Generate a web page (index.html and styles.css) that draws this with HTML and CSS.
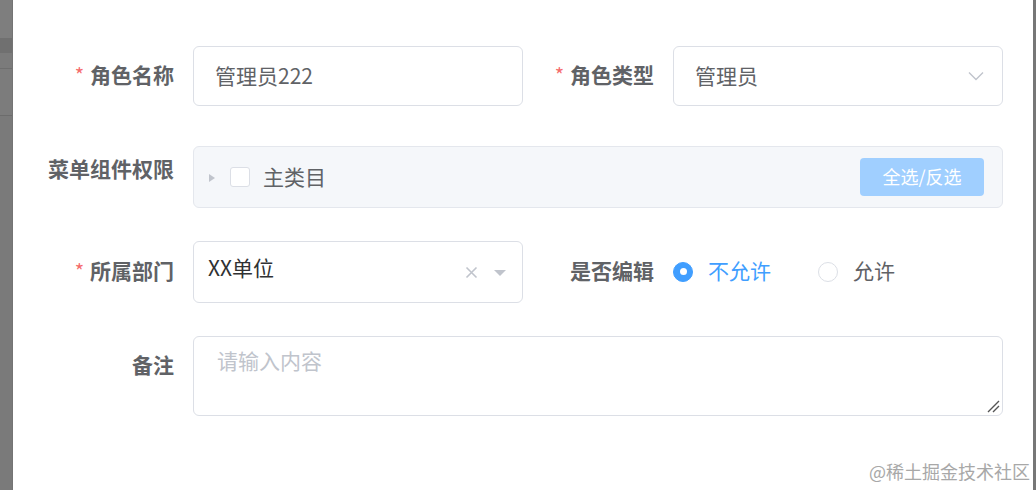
FILE: index.html
```html
<!DOCTYPE html>
<html lang="zh-CN">
<head>
<meta charset="utf-8">
<title>角色编辑</title>
<link rel="stylesheet" href="styles.css">
</head>
<body>
<div class="page">
  <div class="side-left">
    <div class="band b1"></div>
    <div class="band b2"></div>
    <div class="band b3"></div>
    <div class="band b4"></div>
  </div>
  <main class="dialog">
    <form class="form">
      <div class="row r1">
        <label class="lbl req">角色名称</label>
        <div class="field input"><span class="val">管理员222</span></div>
        <label class="lbl lbl-r req">角色类型</label>
        <div class="field input select">
          <span class="val">管理员</span>
          <svg class="chev" width="16" height="10" viewBox="0 0 16 10"><path d="M1 1.5 L8 8.5 L15 1.5" fill="none" stroke="#c0c4cc" stroke-width="1.4"/></svg>
        </div>
      </div>
      <div class="row r2">
        <label class="lbl lbl-top">菜单组件权限</label>
        <div class="field wide tree">
          <span class="caret"></span>
          <span class="checkbox"></span>
          <span class="tree-text">主类目</span>
          <span class="spacer"></span>
          <button type="button" class="btn">全选/反选</button>
        </div>
      </div>
      <div class="row r3">
        <label class="lbl req">所属部门</label>
        <div class="field input select2">
          <span class="val dark">XX单位</span>
          <svg class="clear" width="13" height="13" viewBox="0 0 13 13"><path d="M1.5 1.5 L11.5 11.5 M11.5 1.5 L1.5 11.5" stroke="#c0c4cc" stroke-width="1.6"/></svg>
          <span class="tri"></span>
        </div>
        <label class="lbl lbl-r">是否编辑</label>
        <div class="radios">
          <span class="radio on"></span><span class="rtext on">不允许</span>
          <span class="radio"></span><span class="rtext">允许</span>
        </div>
      </div>
      <div class="row r4">
        <label class="lbl">备注</label>
        <div class="field wide textarea">
          <span class="placeholder">请输入内容</span>
          <svg class="grip" width="14" height="14" viewBox="0 0 14 14"><path d="M2 13 L13 2 M7 13 L13 7" stroke="#555" stroke-width="1.4"/></svg>
        </div>
      </div>
    </form>
  </main>
  <div class="side-right"></div>
  <div class="watermark">@稀土掘金技术社区</div>
</div>
</body>
</html>
```
FILE: styles.css
```css
* { box-sizing: border-box; }
html, body { margin: 0; padding: 0; }
body {
  font-family: "Noto Sans CJK SC", "Noto Sans", sans-serif;
  background: #fff;
}
.page {
  position: relative;
  display: flex;
  width: 1036px;
  height: 490px;
  overflow: hidden;
}
.side-left {
  width: 13px;
  flex: none;
  background: #7a7a7a;
  display: flex;
  flex-direction: column;
  border-right: 1px solid #747474;
}
.band { flex: none; }
.b1 { height: 38px; background: #7e7e7e; }
.b2 { height: 15px; background: #707070; }
.b3 { height: 16px; background: #7b7b7b; border-bottom: 1px solid #6e6e6e; }
.b4 { height: 47px; background: #7c7c7c; border-bottom: 1px solid #6c6c6c; }
.side-right {
  width: 3px;
  flex: none;
  background: #777;
}
.dialog {
  flex: 1;
  background: #fff;
  padding-top: 46px;
}
.form { display: flex; flex-direction: column; }
.row { display: flex; align-items: stretch; }
.r1 { height: 60px; margin-bottom: 40px; }
.r2 { height: 62px; margin-bottom: 33px; }
.r3 { height: 62px; margin-bottom: 33px; }
.r4 { height: 80px; }

.lbl {
  flex: none;
  width: 180px;
  padding-right: 19px;
  text-align: right;
  font-size: 21px;
  font-weight: bold;
  color: #606266;
  line-height: 56px;
}
.r3 .lbl { line-height: 58px; }
.lbl-r { width: 150px; }
.lbl-top { line-height: 45px; }
.req::before {
  content: "*";
  color: #f56c6c;
  margin-right: 6px;
  font-weight: normal;
  font-size: 20px;
}
.field {
  flex: none;
  border: 1px solid #dcdfe6;
  border-radius: 6px;
  background: #fff;
}
.input {
  width: 330px;
  display: flex;
  align-items: center;
  padding-left: 21px;
  padding-right: 16px;
}
.val {
  font-size: 21px;
  color: #606266;
  margin-bottom: 3px;
}
.val.dark { color: #303133; }
.select { justify-content: space-between; }
.chev { margin-right: 2px; }
.wide { width: 810px; }

.tree {
  background: #f5f7fa;
  border-color: #e4e7ed;
  display: flex;
  align-items: center;
  padding: 0 18px 0 15px;
}
.caret {
  width: 0; height: 0;
  border-left: 6px solid #c0c4cc;
  border-top: 4.5px solid transparent;
  border-bottom: 4.5px solid transparent;
  margin-right: 15px;
  margin-top: 1px;
}
.checkbox {
  width: 20px; height: 20px;
  border: 1px solid #dcdfe6;
  border-radius: 3px;
  background: #fff;
  margin-right: 13px;
}
.tree-text { font-size: 21px; color: #606266; margin-bottom: 3px; }
.spacer { flex: 1; }
.btn {
  width: 124px;
  height: 38px;
  border: none;
  border-radius: 4px;
  background: #a0cfff;
  color: #fff;
  font-family: inherit;
  font-size: 18px;
  padding: 0 0 2px;
  margin-bottom: 1px;
}

.select2 {
  padding-left: 14px;
  padding-right: 16px;
}
.select2 .val { flex: 1; margin-bottom: 10px; }
.clear { margin-right: 16px; }
.tri {
  width: 0; height: 0;
  border-top: 6px solid #c0c4cc;
  border-left: 6.5px solid transparent;
  border-right: 6.5px solid transparent;
  margin-top: 1px;
}

.radios {
  display: flex;
  align-items: center;
  padding-bottom: 1px;
}
.radio {
  width: 20px; height: 20px;
  border-radius: 50%;
  border: 1px solid #dcdfe6;
  background: #fff;
  margin-right: 15px;
  flex: none;
}
.radio.on {
  background: #409eff;
  border-color: #409eff;
  position: relative;
}
.radio.on::after {
  content: "";
  position: absolute;
  left: 50%; top: 50%;
  width: 7px; height: 7px;
  margin: -3.5px 0 0 -3.5px;
  border-radius: 50%;
  background: #fff;
}
.rtext {
  font-size: 21px;
  color: #606266;
  margin-right: 47px;
  margin-bottom: 3px;
}
.rtext.on { color: #409eff; }

.textarea {
  position: relative;
  padding: 8px 23px;
  line-height: 30px;
}
.placeholder { font-size: 21px; color: #c0c4cc; }
.grip {
  position: absolute;
  right: 2px;
  bottom: 2px;
}

.watermark {
  position: absolute;
  right: 6px;
  bottom: 7px;
  font-size: 18px;
  color: #a8a8a8;
  letter-spacing: 0;
  line-height: 24px;
}
```
